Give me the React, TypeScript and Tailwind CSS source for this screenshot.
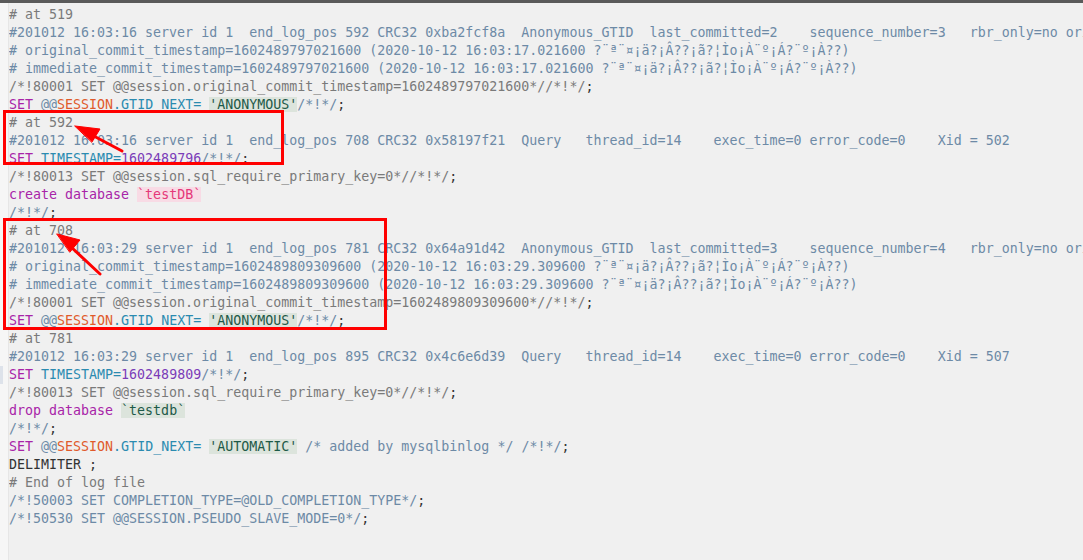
type Tok = [string, string?];

const C = "text-[#6d8aa6]";
const G = "text-[#7a7a7a]";
const KW = "text-[#a824a8]";
const OR = "text-[#e05a2b]";
const TL = "text-[#2b8bb0]";
const NUM = "text-[#7b3cb8]";
const DK = "text-[#333333]";
const STR = "text-[#1e5a48] bg-[#dce4dc]";
const PINK = "text-[#e5387a] bg-[#f8dbe5]";

const moji = "?¨ª¨¤¡ä?¡Â??¡ã?¦Ìo¡À¨º¡Á?¨º¡À??)";

const gtid = (val: string, rest: Tok[]): Tok[] => [
  ["SET", KW],
  [" @@", C],
  ["SESSION", OR],
  [".GTID_NEXT= ", TL],
  [val, STR],
  ...rest,
];

const lines: Tok[][] = [
  [["# at 519", G]],
  [["#201012 16:03:16 server id 1  end_log_pos 592 CRC32 0xba2fcf8a  Anonymous_GTID  last_committed=2    sequence_number=3   rbr_only=no ori", C]],
  [["# original_commit_timestamp=1602489797021600 (2020-10-12 16:03:17.021600 " + moji, C]],
  [["# immediate_commit_timestamp=1602489797021600 (2020-10-12 16:03:17.021600 " + moji, C]],
  [["/*!80001 SET @@session.original_commit_timestamp=1602489797021600*//*!*/", G], [";", DK]],
  gtid("'ANONYMOUS'", [["/*!*/", C], [";", DK]]),
  [["# at 592", G]],
  [["#201012 16:03:16 server id 1  end_log_pos 708 CRC32 0x58197f21  Query   thread_id=14    exec_time=0 error_code=0    Xid = 502", C]],
  [["SET", KW], [" TIMESTAMP=", TL], ["1602489796", NUM], ["/*!*/", C], [";", DK]],
  [["/*!80013 SET @@session.sql_require_primary_key=0*//*!*/", G], [";", DK]],
  [["create database", KW], [" "], ["`testDB`", PINK]],
  [["/*!*/", C], [";", DK]],
  [["# at 708", G]],
  [["#201012 16:03:29 server id 1  end_log_pos 781 CRC32 0x64a91d42  Anonymous_GTID  last_committed=3    sequence_number=4   rbr_only=no ori", C]],
  [["# original_commit_timestamp=1602489809309600 (2020-10-12 16:03:29.309600 " + moji, C]],
  [["# immediate_commit_timestamp=1602489809309600 (2020-10-12 16:03:29.309600 " + moji, C]],
  [["/*!80001 SET @@session.original_commit_timestamp=1602489809309600*//*!*/", G], [";", DK]],
  gtid("'ANONYMOUS'", [["/*!*/", C], [";", DK]]),
  [["# at 781", G]],
  [["#201012 16:03:29 server id 1  end_log_pos 895 CRC32 0x4c6e6d39  Query   thread_id=14    exec_time=0 error_code=0    Xid = 507", C]],
  [["SET", KW], [" TIMESTAMP=", TL], ["1602489809", NUM], ["/*!*/", C], [";", DK]],
  [["/*!80013 SET @@session.sql_require_primary_key=0*//*!*/", G], [";", DK]],
  [["drop database", KW], [" "], ["`testdb`", STR]],
  [["/*!*/", C], [";", DK]],
  gtid("'AUTOMATIC'", [[" /* added by mysqlbinlog */ /*!*/", C], [";", DK]]),
  [["DELIMITER ;", DK]],
  [["# End of log file", G]],
  [["/*!50003 SET COMPLETION_TYPE=@OLD_COMPLETION_TYPE*/", C], [";", DK]],
  [["/*!50530 SET @@SESSION.PSEUDO_SLAVE_MODE=0*/", C], [";", DK]],
];

export default function App() {
  return (
    <div className="relative w-[1083px] h-[560px] overflow-hidden bg-[#f0f0f0] flex flex-col">
      {/* top edge of the window above */}
      <div className="h-[3px] bg-[#5a5a5a] shrink-0" />

      <div className="flex flex-1 min-h-0">
        {/* gutter */}
        <div className="w-[9px] shrink-0 bg-[#f6f6f6] border-r border-[#e6e6e6] pt-[3px] flex flex-col">
          <div className="h-[18px] mt-[360px] w-[3px] bg-[#dde2ea]" />
        </div>

        <pre
          className="flex-1 min-w-0 overflow-hidden pt-[3px] text-[13.3px] leading-[18px]"
          style={{ fontFamily: '"DejaVu Sans Mono", "Liberation Mono", monospace' }}
        >
          {lines.map((l, i) => (
            <div key={i} className="h-[18px] whitespace-pre">
              {l.map(([t, cls], j) => (
                <span key={j} className={cls}>
                  {t}
                </span>
              ))}
            </div>
          ))}
        </pre>
      </div>

      {/* annotation boxes */}
      <div className="absolute left-[3px] top-[110px] w-[281px] h-[55px] border-[3px] border-[#ff0000]" />
      <div className="absolute left-[3px] top-[218px] w-[384px] h-[112px] border-[3px] border-[#ff0000]" />

      {/* arrows */}
      <svg className="absolute left-0 top-0" width="1083" height="560">
        <g fill="#ff0000" stroke="#ff0000" strokeWidth="3" strokeLinecap="round">
          <line x1="122" y1="151" x2="90" y2="134" />
          <polygon points="75,126 100,129 92,142" strokeWidth="1" />
          <line x1="100" y1="274" x2="70" y2="246" />
          <polygon points="57,234 80,240 70,252" strokeWidth="1" />
        </g>
      </svg>
    </div>
  );
}
